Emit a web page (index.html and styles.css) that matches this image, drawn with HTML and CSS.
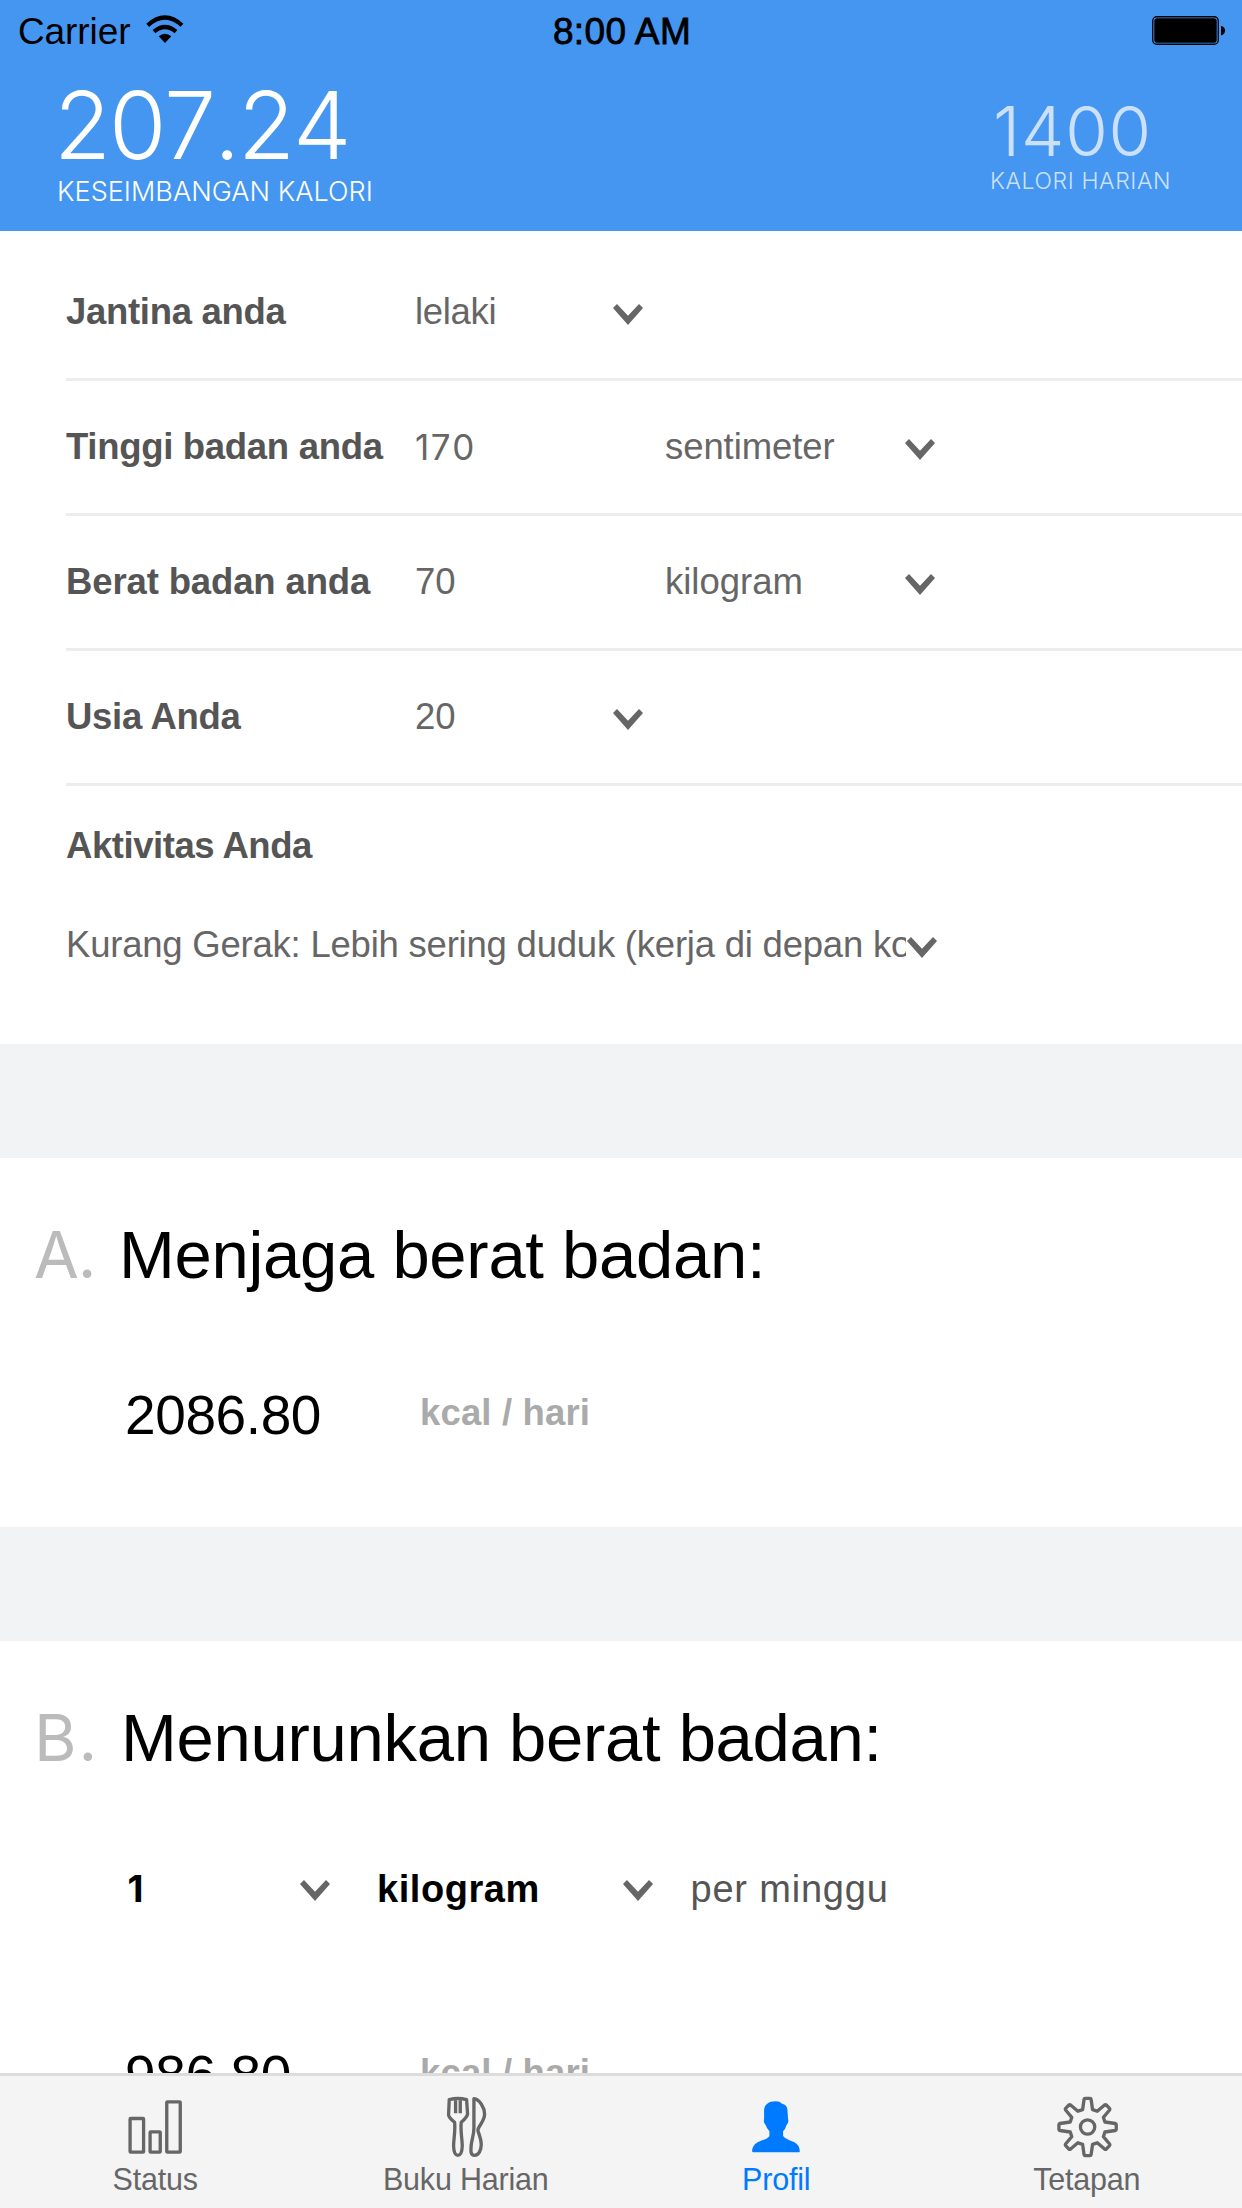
FILE: index.html
```html
<!DOCTYPE html>
<html lang="ms">
<head>
<meta charset="utf-8">
<title>Profil</title>
<link rel="stylesheet" href="styles.css">
</head>
<body>
<svg class="defs" aria-hidden="true">
  <symbol id="chevron" viewBox="0 0 30 21"><path d="M0 4 4 0 15 11.800 26 0 30 4 15 21Z"/></symbol>
</svg>
<div class="app">
  <header class="header">
    <div class="statusbar">
      <div class="carrier">
        <span>Carrier</span>
        <svg class="wifi" viewBox="440 45 114 87">
          <path d="M445 76Q497 29 548 76M464 95Q497 67 530 95" fill="none" stroke="#000" stroke-width="12.500"/>
          <path d="M478 109Q497 93 516 109L497 129Z"/>
        </svg>
      </div>
      <span class="time">8:00 AM</span>
      <svg class="battery" viewBox="0 0 74 29">
        <rect x=".75" y=".75" width="65.5" height="27.5" rx="4" fill="none" stroke="#000" stroke-width="1.3"/>
        <rect x="2.3" y="2.3" width="62.4" height="24.4" rx="2.8"/>
        <path d="M69 10Q73 10.500 73 14.500T69 19.500Z"/>
      </svg>
    </div>
    <div class="totals">
      <div class="balance">
        <div class="balance-value">207.24</div>
        <div class="balance-label">KESEIMBANGAN KALORI</div>
      </div>
      <div class="daily">
        <div class="daily-value">1400</div>
        <div class="daily-label">KALORI HARIAN</div>
      </div>
    </div>
  </header>

  <main class="content">
    <section class="form">
      <div class="row">
        <label class="label">Jantina anda</label>
        <span class="value value-select value-text">lelaki</span>
        <svg class="chevron"><use href="#chevron"/></svg>
      </div>
      <div class="row">
        <label class="label">Tinggi badan anda</label>
        <span class="value value-number">170</span>
        <span class="unit">sentimeter</span>
        <svg class="chevron"><use href="#chevron"/></svg>
      </div>
      <div class="row">
        <label class="label label-loose">Berat badan anda</label>
        <span class="value">70</span>
        <span class="unit unit-loose">kilogram</span>
        <svg class="chevron"><use href="#chevron"/></svg>
      </div>
      <div class="row">
        <label class="label">Usia Anda</label>
        <span class="value value-select">20</span>
        <svg class="chevron"><use href="#chevron"/></svg>
      </div>
      <div class="activity">
        <label class="activity-label">Aktivitas Anda</label>
        <div class="activity-select">
          <span class="activity-value">Kurang Gerak: Lebih sering duduk (kerja di depan komputer)</span>
          <svg class="chevron"><use href="#chevron"/></svg>
        </div>
      </div>
    </section>

    <section class="plan">
      <h2 class="plan-title"><span class="plan-index">A.</span>Menjaga berat badan:</h2>
      <div class="result">
        <span class="result-value">2086.80</span>
        <span class="result-unit">kcal / hari</span>
      </div>
    </section>

    <section class="plan plan-b">
      <h2 class="plan-title"><span class="plan-index">B.</span>Menurunkan berat badan:</h2>
      <div class="rate">
        <span class="rate-amount">1</span>
        <svg class="chevron"><use href="#chevron"/></svg>
        <span class="rate-unit">kilogram</span>
        <svg class="chevron"><use href="#chevron"/></svg>
        <span class="rate-period">per minggu</span>
      </div>
      <div class="result">
        <span class="result-value">986.80</span>
        <span class="result-unit">kcal / hari</span>
      </div>
    </section>
  </main>

  <nav class="tabbar">
    <a class="tab">
      <svg class="tab-icon" viewBox="102.75 108 186 186">
        <rect x="121" y="175.500" width="40.500" height="101" rx="2"/>
        <rect x="181" y="215.500" width="30.500" height="61" rx="2"/>
        <rect x="231" y="125.500" width="40.500" height="151" rx="2"/>
      </svg>
      <span>Status</span>
    </a>
    <a class="tab">
      <svg class="tab-icon" viewBox="194.25 168 186 186">
        <path d="M237 179Q263 172 289 179L292 222Q291 231 273 247C270 274 276 297 276 318Q275 346 263 346T250 318C250 297 256 274 253 247Q236 233 235 225ZM256 179V220M270 179V220M311 176C328 178 343 203 343 222C343 245 323 259 323 271C326 284 333 296 333 313C333 332 325 346 313 346S301 335 303 315C304 300 311 285 311 264Z"/>
      </svg>
      <span>Buku Harian</span>
    </a>
    <a class="tab tab-active">
      <svg class="tab-icon" viewBox="105.75 108 186 186">
        <path d="M198 124Q211 124 217 131Q232 134 233 149L235 177Q238 188 230 196Q227 208 220 214V228Q225 236 239 241C260 248 270 256 270 275Q269 277 266 277H131Q127 277 127 273C128 256 139 248 157 241Q174 236 179 228V214Q171 206 168 196Q160 188 163 177V152C163 134 177 124 198 124Z"/>
      </svg>
      <span>Profil</span>
    </a>
    <a class="tab">
      <svg class="tab-icon" viewBox="137.25 108 186 186">
        <path transform="translate(232 201)" d="M-15-52-10.500-83Q-10-86-7-86H7Q10-86 10.500-83L15-52 29-47.400 51-66Q54-68 56-66L66-56Q68-54 66-51L47.400-29 52-15 83-10.500Q86-10 86-7V7Q86 10 83 10.500L52 15 47.400 29 66 51Q68 54 66 56L56 66Q54 68 51 66L29 47.400 15 52 10.500 83Q10 86 7 86H-7Q-10 86-10.500 83L-15 52-29 47.400-51 66Q-54 68-56 66L-66 56Q-68 54-66 51L-47.400 29-52 15-83 10.500Q-86 10-86 7V-7Q-86-10-83-10.500L-52-15-47.400-29-66-51Q-68-54-66-56L-56-66Q-54-68-51-66L-29-47.400Z"/>
        <circle cx="232" cy="201" r="21.500"/>
      </svg>
      <span>Tetapan</span>
    </a>
  </nav>
</div>
</body>
</html>
```
FILE: styles.css
```css
* {
  box-sizing: border-box;
}

body {
  margin: 0;
  font-family: "Liberation Sans", Arial, sans-serif;
  background: #fff;
}

.defs {
  display: none;
}

.app {
  display: flex;
  flex-direction: column;
  width: 1242px;
  height: 2208px;
  overflow: hidden;
}

/* Header */

.header {
  flex: none;
  height: 231px;
  background: #4596f1;
  color: #fff;
}

.statusbar {
  display: grid;
  grid-template-columns: 1fr auto 1fr;
  height: 60px;
  padding: 10px 16px 0 18px;
  font-size: 37px;
  line-height: 44px;
  color: #000;
}

.carrier {
  display: flex;
  gap: 16px;
  letter-spacing: -0.1px;
}

.wifi {
  width: 38px;
  height: 29px;
  margin-top: 5px;
}

.time {
  letter-spacing: 0.34px;
  -webkit-text-stroke: 0.8px #000;
}

.battery {
  width: 74px;
  height: 29px;
  margin-top: 6px;
  justify-self: end;
}

.totals {
  display: flex;
  justify-content: space-between;
  padding: 20px 0 0 54px;
  font-family: Inter, "Liberation Sans", sans-serif;
}

.balance-value {
  font-size: 93px;
  line-height: 90px;
  font-weight: 300;
  font-kerning: none;
  letter-spacing: -2.2px;
}

.balance-label {
  margin-top: 6px;
  padding-left: 3px;
  font-size: 27px;
  line-height: 32px;
  font-weight: 350;
  letter-spacing: 0.05px;
}

.daily {
  width: 252px;
  padding-top: 16px;
  color: #cbe1fb;
}

.daily-value {
  padding-left: 3px;
  font-size: 69px;
  line-height: 70px;
  font-weight: 300;
  letter-spacing: 0.8px;
}

.daily-label {
  margin-top: 1px;
  font-size: 23px;
  line-height: 28px;
  font-weight: 350;
  letter-spacing: 0.6px;
}

/* Profile form */

.content {
  flex: 1;
  min-height: 0;
  overflow: hidden;
  background: #f2f3f5;
}

.form {
  height: 813px;
  padding-top: 15px;
  background: #fff;
  font-size: 36.5px;
  line-height: 40px;
  color: #666;
}

.row {
  display: flex;
  align-items: center;
  height: 135px;
  margin-left: 66px;
  border-bottom: 3px solid #ededed;
}

.chevron {
  flex: none;
  width: 30px;
  height: 21px;
  fill: #666;
}

.row .chevron {
  margin-top: 5px;
}

.label {
  width: 349px;
  font-weight: bold;
  letter-spacing: -0.3px;
  color: #555;
}

.label-loose {
  letter-spacing: -0.13px;
}

.value {
  width: 250px;
}

.value-select {
  width: 198px;
}

.value-text {
  letter-spacing: -0.3px;
}

.value-number {
  font-family: Inter, "Liberation Sans", sans-serif;
  font-size: 35px;
  font-weight: 400;
  font-kerning: none;
  letter-spacing: 1.6px;
}

.unit {
  width: 240px;
  letter-spacing: -0.08px;
}

.unit-loose {
  letter-spacing: 0;
}

.activity {
  padding: 40px 0 0 66px;
}

.activity-label {
  display: block;
  font-weight: bold;
  letter-spacing: -0.45px;
  color: #555;
}

.activity-select {
  display: flex;
  align-items: center;
  gap: 1px;
  margin-top: 59px;
}

.activity-value {
  width: 840px;
  overflow: hidden;
  white-space: nowrap;
  letter-spacing: -0.22px;
}

.activity-select .chevron {
  margin-top: 5px;
}

/* Calorie plans */

.plan {
  height: 369px;
  margin-top: 114px;
  padding-top: 57px;
  background: #fff;
}

.plan-b {
  height: 540px;
}

.plan-title {
  display: flex;
  align-items: baseline;
  margin: 0;
  font-size: 67px;
  line-height: 80px;
  font-weight: normal;
  letter-spacing: -0.28px;
  color: #000;
}

.plan-index {
  width: 119px;
  padding-left: 34px;
  font-family: Inter, "Liberation Sans", sans-serif;
  font-size: 65px;
  font-weight: 400;
  letter-spacing: -1px;
  color: #bbb;
}

.plan-b .plan-index {
  width: 121px;
  letter-spacing: 2px;
}

.result {
  display: flex;
  align-items: flex-start;
  margin-top: 88px;
  padding-left: 125px;
}

.plan-b .result {
  margin-top: 132px;
}

.result-value {
  width: 295px;
  font-size: 55px;
  line-height: 64px;
  letter-spacing: -0.4px;
}

.result-unit {
  margin-top: 10px;
  font-size: 36.5px;
  line-height: 40px;
  font-weight: bold;
  letter-spacing: 0.15px;
  color: #aaa;
}

.rate {
  display: flex;
  align-items: center;
  margin-top: 89px;
  padding-left: 127.5px;
  font-size: 38px;
  line-height: 44px;
}

.rate .chevron {
  margin-top: 2px;
}

.rate-amount {
  width: 172.5px;
  font-family: Inter, "Liberation Sans", sans-serif;
  font-size: 37px;
  font-weight: 700;
}

.rate-unit {
  width: 293px;
  padding-left: 47px;
  font-weight: bold;
  letter-spacing: 0.55px;
}

.rate-period {
  padding-left: 37.5px;
  letter-spacing: 0.8px;
  color: #555;
}

/* Tab bar */

.tabbar {
  flex: none;
  display: grid;
  grid-template-columns: repeat(4, 1fr);
  height: 135px;
  padding-top: 20px;
  border-top: 3px solid #dcdcdc;
  background: #f4f4f4;
}

.tab {
  display: flex;
  flex-direction: column;
  align-items: center;
  gap: 3px;
  font-size: 30.5px;
  line-height: 36px;
  letter-spacing: -0.2px;
  color: #666;
}

.tab-icon {
  width: 62px;
  height: 62px;
  fill: none;
  stroke: currentColor;
  stroke-width: 10;
  stroke-linejoin: round;
}

.tab-active {
  color: #007aff;
}

.tab-active .tab-icon {
  fill: currentColor;
  stroke: none;
}
```
